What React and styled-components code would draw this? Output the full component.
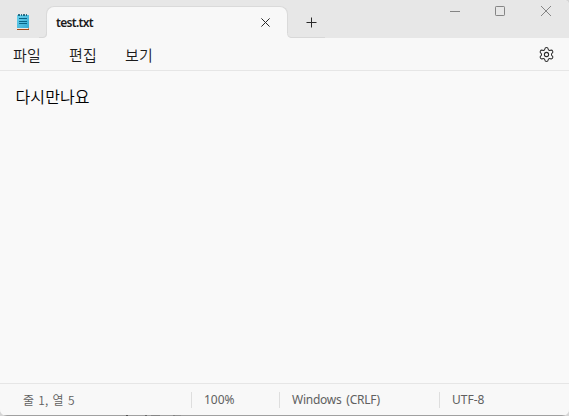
import React from "react";
import styled, { createGlobalStyle } from "styled-components";
import { Settings } from "lucide-react";

const GlobalStyle = createGlobalStyle`
  * { box-sizing: border-box; }
  html, body { margin: 0; background: #d5d5d5; overflow: hidden; }
`;

const Window = styled.div`
  width: 569px;
  height: 416px;
  display: flex;
  flex-direction: column;
  overflow: hidden;
  background: #f9f9f9;
  border-radius: 0 5px 7px 7px;
  font-family: "Noto Sans", "Noto Sans CJK KR", sans-serif;
  color: #1b1b1b;
`;

const TitleBar = styled.header`
  flex: none;
  height: 38px;
  display: flex;
  background: #e7e7e7;
`;

const AppIcon = styled.svg`
  flex: none;
  width: 16px;
  height: 18px;
  margin: 13px 15px 0 15px;
`;

const Tab = styled.div`
  position: relative;
  width: 242px;
  height: 32px;
  margin-top: 6px;
  padding: 0 17px 0 9px;
  display: flex;
  align-items: center;
  justify-content: space-between;
  background: #f8f8f8;
  border: 1px solid #dadada;
  border-bottom: 0;
  border-radius: 8px 8px 0 0;
`;

const Flare = styled.svg`
  position: absolute;
  bottom: 0;
  left: ${(p) => p.$left}px;
  width: ${(p) => p.$width}px;
  height: 6px;
`;

const Label = styled.span`
  white-space: pre;
  font-size: ${(p) => p.$size}px;
  line-height: 20px;
  font-weight: ${(p) => p.$weight || 400};
  letter-spacing: ${(p) => p.$spacing || 0}px;
  word-spacing: ${(p) => p.$wordGap || 0}px;
`;

const KoreanLabel = styled(Label)`
  font-family: "Noto Sans CJK KR DemiLight", "Noto Sans CJK KR", sans-serif;
  font-weight: 350;
`;

const Glyph = styled.svg`
  display: block;
  flex: none;
  width: ${(p) => p.$size}px;
  height: ${(p) => p.$size}px;
  fill: none;
  stroke: ${(p) => p.$color || "#292929"};
  stroke-width: 1;
`;

const NewTab = styled.div`
  padding: 17px 0 0 18px;
`;

const WindowControls = styled.div`
  margin-left: auto;
  padding: 5px 17px 0 0;
  display: flex;
  gap: 34px;
`;

const MenuBar = styled.nav`
  flex: none;
  height: 33px;
  padding: 1px 14px 0 13px;
  display: flex;
  align-items: center;
  gap: 28px;
  background: #f8f8f8;
  border-bottom: 1px solid #e6e6e6;
`;

const Gear = styled(Settings)`
  margin: 0 0.5px 1px auto;
`;

const Editor = styled.main`
  flex: 1;
  padding: 15px 15.5px;
  color: #000;
`;

const StatusBar = styled.footer`
  flex: none;
  height: 32px;
  padding-top: 1px;
  display: flex;
  align-items: center;
  background: #f8f8f8;
  border-top: 1px solid #e6e6e6;
  color: #606060;
`;

const StatusItem = styled.div`
  flex: none;
  width: ${(p) => p.$width}px;
  height: 16px;
  padding-left: ${(p) => (p.$first ? 23 : 12)}px;
  display: flex;
  align-items: center;
  border-left: ${(p) => (p.$first ? 0 : 1)}px solid #dedede;
`;

const BottomEdge = styled.div`
  flex: none;
  height: 1px;
  background: linear-gradient(
    90deg,
    #a0a0a0 0 126px, #505050 126px 128px, #a0a0a0 128px 145px,
    #666 145px 147px, #a0a0a0 147px 151px, #858585 151px 160px,
    #a0a0a0 160px 173px, #808080 173px 175px, #929292 175px 181px,
    #a0a0a0 181px
  );
`;

export default function App() {
  return (
    <>
      <GlobalStyle />
      <Window>
        <TitleBar>
          <AppIcon viewBox="0 0 16 18">
            <defs>
              <linearGradient id="paper" x1="0" y1="0" x2="1" y2="1">
                <stop offset="0" stopColor="#6bd3ee" />
                <stop offset="1" stopColor="#36a9d1" />
              </linearGradient>
            </defs>
            <path d="M2 16h12v1H2z" fill="#a34a18" />
            <path d="M2 15h11v1H2z" fill="#eee8e3" />
            <path d="M13 15h1v1h-1z" fill="#d9905f" />
            <path d="M2 2h12v13H2z" fill="url(#paper)" />
            <path d="M3 1h2v2H3zM6 1h1v2H6zM8 1h2v2H8zM11 1h1v2h-1z" fill="#07516c" opacity=".8" />
            <path d="M4 5h8v1H4zM4 8h8v1H4zM4 10h8v1H4z" fill="#086486" />
          </AppIcon>
          <Tab>
            <Label $size={12} $weight={600} $spacing={-0.7}>test.txt</Label>
            <Glyph $size={9} viewBox="0 0 9 9"><path d="M.4.4l8.2 8.2M8.6.4L.4 8.6" /></Glyph>
            <Flare $left={-8} $width={9} viewBox="0 0 9 6">
              <path d="M4 6Q8 6 8 1V0h1v6z" fill="#f8f8f8" />
              <path d="M0 5.5h4q3.5 0 3.5-4V0" fill="none" stroke="#d8d8d8" />
            </Flare>
            <Flare $left={240} $width={39} viewBox="0 0 39 6">
              <path d="M5 6Q1 6 1 1V0H0v6z" fill="#f8f8f8" />
              <path d="M39 5.5H5q-3.5 0-3.5-4V0" transform="translate(-1 0)" fill="none" stroke="#d8d8d8" />
            </Flare>
          </Tab>
          <NewTab>
            <Glyph $size={11} viewBox="0 0 11 11"><path d="M5.5.5v10M.5 5.5h10" /></Glyph>
          </NewTab>
          <WindowControls>
            <Glyph $size={12} $color="#858585" viewBox="0 0 12 12"><path d="M2 6.5h10" /></Glyph>
            <Glyph $size={12} $color="#858585" viewBox="0 0 12 12"><rect x="1.5" y="1.5" width="9" height="9" rx=".7" /></Glyph>
            <Glyph $size={12} $color="#858585" viewBox="0 0 12 12"><path d="M1 1l10 10M11 1L1 11" /></Glyph>
          </WindowControls>
        </TitleBar>
        <MenuBar>
          <KoreanLabel $size={15} $spacing={0.2}>파일</KoreanLabel>
          <KoreanLabel $size={15} $spacing={0.2}>편집</KoreanLabel>
          <KoreanLabel $size={15} $spacing={0.2}>보기</KoreanLabel>
          <Gear size={17} strokeWidth={1.5} color="#303030" />
        </MenuBar>
        <Editor><KoreanLabel $size={16} $spacing={0.1}>다시만나요</KoreanLabel></Editor>
        <StatusBar>
          <StatusItem $first $width={191}><KoreanLabel $size={12} $spacing={0.2} $wordGap={1.2}>줄 1, 열 5</KoreanLabel></StatusItem>
          <StatusItem $width={88}><Label $size={12}>100%</Label></StatusItem>
          <StatusItem $width={160}><Label $size={12} $spacing={-0.25} $wordGap={2}>Windows (CRLF)</Label></StatusItem>
          <StatusItem $width={130}><Label $size={12}>UTF-8</Label></StatusItem>
        </StatusBar>
        <BottomEdge />
      </Window>
    </>
  );
}
